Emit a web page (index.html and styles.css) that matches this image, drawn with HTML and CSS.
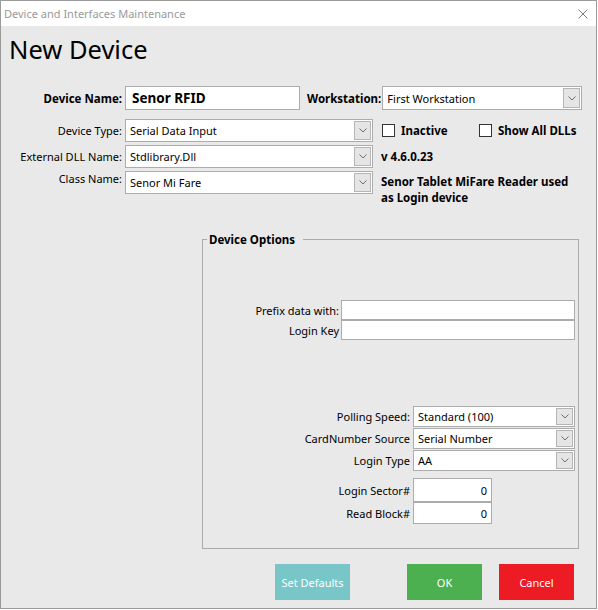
FILE: index.html
```html
<!DOCTYPE html>
<html>
<head>
    <title>Device and Interfaces Maintenance</title>
    <link rel="stylesheet" href="styles.css">
</head>
<body>
    <div class="window">
        <div class="titlebar">
            <span>Device and Interfaces Maintenance</span>
            <svg class="close" viewBox="0 0 10 10"><path d="M0.5 0.5 L9.5 9.5 M9.5 0.5 L0.5 9.5" stroke="#7a7a7a" stroke-width="1" fill="none"/></svg>
        </div>
        <div class="content">
            <h1>New Device</h1>

            <div class="main-form">
                <div class="row row-name">
                    <label class="lbl bold">Device Name:</label>
                    <div class="textbox name-box">Senor RFID</div>
                    <label class="ws-label bold">Workstation:</label>
                    <div class="combo ws-combo">
                        <span>First Workstation</span>
                        <span class="drop"><svg viewBox="0 0 8 5"><path d="M0.5 0.5 L4 4 L7.5 0.5" stroke="#6d6d6d" fill="none"/></svg></span>
                    </div>
                </div>

                <div class="row">
                    <label class="lbl">Device Type:</label>
                    <div class="combo main-combo">
                        <span>Serial Data Input</span>
                        <span class="drop"><svg viewBox="0 0 8 5"><path d="M0.5 0.5 L4 4 L7.5 0.5" stroke="#6d6d6d" fill="none"/></svg></span>
                    </div>
                    <div class="side checks bold">
                        <span class="check inactive"><span class="box"></span>Inactive</span>
                        <span class="check"><span class="box"></span>Show All DLLs</span>
                    </div>
                </div>

                <div class="row">
                    <label class="lbl">External DLL Name:</label>
                    <div class="combo main-combo">
                        <span>Stdlibrary.Dll</span>
                        <span class="drop"><svg viewBox="0 0 8 5"><path d="M0.5 0.5 L4 4 L7.5 0.5" stroke="#6d6d6d" fill="none"/></svg></span>
                    </div>
                    <div class="side bold">v 4.6.0.23</div>
                </div>

                <div class="row row-class">
                    <label class="lbl">Class Name:</label>
                    <div class="combo main-combo">
                        <span>Senor Mi Fare</span>
                        <span class="drop"><svg viewBox="0 0 8 5"><path d="M0.5 0.5 L4 4 L7.5 0.5" stroke="#6d6d6d" fill="none"/></svg></span>
                    </div>
                    <div class="side bold desc">Senor Tablet MiFare Reader used as Login device</div>
                </div>
            </div>

            <fieldset class="options">
                <legend>Device Options</legend>

                <div class="opt-grid prefix-grid">
                    <label>Prefix data with:</label>
                    <div class="textbox"></div>
                    <label>Login Key</label>
                    <div class="textbox"></div>
                </div>

                <div class="opt-grid select-grid">
                    <label>Polling Speed:</label>
                    <div class="combo">
                        <span>Standard (100)</span>
                        <span class="drop"><svg viewBox="0 0 8 5"><path d="M0.5 0.5 L4 4 L7.5 0.5" stroke="#6d6d6d" fill="none"/></svg></span>
                    </div>
                    <label>CardNumber Source</label>
                    <div class="combo">
                        <span>Serial Number</span>
                        <span class="drop"><svg viewBox="0 0 8 5"><path d="M0.5 0.5 L4 4 L7.5 0.5" stroke="#6d6d6d" fill="none"/></svg></span>
                    </div>
                    <label>Login Type</label>
                    <div class="combo">
                        <span>AA</span>
                        <span class="drop"><svg viewBox="0 0 8 5"><path d="M0.5 0.5 L4 4 L7.5 0.5" stroke="#6d6d6d" fill="none"/></svg></span>
                    </div>
                </div>

                <div class="opt-grid number-grid">
                    <label>Login Sector#</label>
                    <div class="textbox num">0</div>
                    <label>Read Block#</label>
                    <div class="textbox num">0</div>
                </div>
            </fieldset>

            <div class="buttons">
                <div class="btn btn-defaults">Set Defaults</div>
                <div class="btn btn-ok">OK</div>
                <div class="btn btn-cancel">Cancel</div>
            </div>
        </div>
    </div>
</body>
</html>
```

FILE: styles.css
```css
body {
    margin: 0;
    background: #ffffff;
    font-family: "Noto Sans", "Open Sans", sans-serif;
    font-size: 11px;
    color: #000;
}
.window {
    width: 597px;
    height: 609px;
    box-sizing: border-box;
    border: 1px solid #9b9b9b;
    background: #e9e9e9;
}
.titlebar {
    height: 25px;
    background: #fff;
    color: #9a9a9a;
    display: flex;
    align-items: center;
    justify-content: space-between;
    padding: 0 8px 0 3px;
}
.close {
    width: 10px;
    height: 10px;
}
h1 {
    margin: 0;
    padding: 7px 0 0 8px;
    font-size: 25.5px;
    font-weight: normal;
    line-height: 32px;
}
.bold {
    font-weight: bold;
    font-size: 11.5px;
}
.main-form {
    margin-top: 21px;
}
.row {
    display: flex;
    align-items: center;
    height: 23px;
    margin-bottom: 3px;
}
.row-name {
    height: 24px;
    margin-bottom: 9px;
}
.row-class {
    align-items: flex-start;
}
.lbl {
    width: 121px;
    margin-right: 3px;
    text-align: right;
    white-space: nowrap;
}
.textbox {
    box-sizing: border-box;
    height: 100%;
    background: #fff;
    border: 1px solid #acacac;
    padding: 0 4px;
    display: flex;
    align-items: center;
}
.name-box {
    width: 175px;
    padding-left: 6px;
    font-size: 13.5px;
    font-weight: bold;
}
.ws-label {
    margin-left: 7px;
    margin-right: 1px;
}
.combo {
    box-sizing: border-box;
    height: 100%;
    background: #fff;
    border: 1px solid #acacac;
    padding: 1px 1px 1px 4px;
    display: flex;
    align-items: center;
    justify-content: space-between;
}
.drop {
    box-sizing: border-box;
    width: 17px;
    height: 100%;
    background: #e5e5e5;
    border: 1px solid #b5b5b5;
    display: flex;
    align-items: center;
    justify-content: center;
}
.drop svg {
    width: 8px;
    height: 5px;
}
.ws-combo {
    width: 200px;
}
.main-combo {
    width: 248px;
}
.side {
    margin-left: 8px;
}
.checks {
    display: flex;
}
.check {
    display: flex;
    align-items: center;
    margin-left: 1px;
}
.inactive {
    width: 96px;
}
.check .box {
    width: 11px;
    height: 11px;
    border: 1px solid #333;
    background: #fff;
    margin-right: 6px;
}
.desc {
    width: 195px;
    line-height: 16px;
    padding-top: 3px;
}
.options {
    margin: 38px 0 0 201px;
    width: 377px;
    box-sizing: border-box;
    border: 1px solid #ababab;
    padding: 0 0 24px 0;
}
.options legend {
    margin-left: 4px;
    padding: 0 8px 0 2px;
    font-weight: bold;
    font-size: 11.5px;
    line-height: 15px;
}
.opt-grid {
    display: grid;
    align-items: center;
}
.opt-grid label {
    text-align: right;
    white-space: nowrap;
}
.prefix-grid {
    margin-top: 53px;
    grid-template-columns: 136px 234px;
    grid-template-rows: 20px 20px;
    column-gap: 2px;
}
.select-grid {
    margin-top: 66px;
    grid-template-columns: 207px 162px;
    grid-template-rows: 21px 21px 21px;
    column-gap: 3px;
    row-gap: 1px;
}
.number-grid {
    margin-top: 7px;
    grid-template-columns: 207px 79px;
    grid-template-rows: 24px 22px;
    column-gap: 3px;
}
.num {
    justify-content: flex-end;
}
.buttons {
    display: flex;
    margin: 15px 0 0 274px;
}
.btn {
    width: 75px;
    height: 36px;
    color: #fff;
    display: flex;
    align-items: center;
    justify-content: center;
}
.btn-defaults {
    background: #78c6c8;
}
.btn-ok {
    background: #4cb051;
    margin-left: 57px;
}
.btn-cancel {
    background: #ed1c24;
    margin-left: 17px;
}
```
